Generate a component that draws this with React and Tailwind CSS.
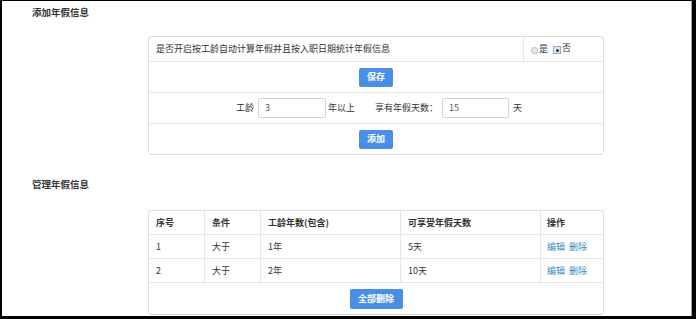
import React from "react";

const rows = [
  { id: 1, cond: "大于", years: "1年", days: "5天" },
  { id: 2, cond: "大于", years: "2年", days: "10天" },
];

export default function App() {
  return (
    <div className="w-[696px] h-[319px] bg-black overflow-hidden" style={{ fontFamily: '"Noto Sans CJK SC", "Liberation Sans", sans-serif' }}>
      <div className="ml-[2px] mt-px w-[690px] h-[315px] bg-white border-r border-gray-400 overflow-hidden text-[9px] text-[#333]">
        {/* 添加年假信息 */}
        <h2 className="pl-[30px] pt-[5px] h-[35px] text-[9.5px] font-bold leading-[12px]">添加年假信息</h2>
        <div className="ml-[146px] w-[456px] border border-[#ddd] rounded-[3px]">
          <div className="flex h-[25px] border-b border-[#e6e6e6]">
            <div className="w-[375px] pl-[7px] flex items-center border-r border-[#e6e6e6]">是否开启按工龄自动计算年假并且按入职日期统计年假信息</div>
            <div className="flex items-center pl-[7px]">
              <span className="w-[7px] h-[7px] rounded-full border border-[#bbb] bg-[#e8e8e8] mt-[2px]"></span>
              <span className="ml-px">是</span>
              <span className="ml-[5px] w-[8px] h-[8px] border border-[#9aa6c8] bg-[#dfe6f5] flex items-center justify-center mt-[2px]">
                <span className="w-[3px] h-[3px] rounded-full bg-[#333]"></span>
              </span>
              <span className="ml-px -mt-[3px]">否</span>
            </div>
          </div>
          <div className="flex h-[31px] items-center justify-center border-b border-[#e6e6e6]">
            <button className="w-[34px] h-[19px] bg-[#4a8fe6] text-white font-bold rounded-[2px]">保存</button>
          </div>
          <div className="flex h-[31px] items-center justify-center pl-[6px] border-b border-[#e6e6e6]">
            <span>工龄</span>
            <div className="ml-[4px] w-[68px] h-[20px] border border-[#d4d4d4] rounded-[2px] flex items-center pl-[6px] text-[#555]">3</div>
            <span className="ml-[2px]">年以上</span>
            <span className="ml-[20px]">享有年假天数：</span>
            <div className="ml-[4px] w-[67px] h-[20px] border border-[#d4d4d4] rounded-[2px] flex items-center pl-[6px] text-[#555]">15</div>
            <span className="ml-[4px]">天</span>
          </div>
          <div className="flex h-[30px] items-center justify-center">
            <button className="w-[34px] h-[19px] bg-[#4a8fe6] text-white font-bold rounded-[2px]">添加</button>
          </div>
        </div>

        {/* 管理年假信息 */}
        <h2 className="pl-[30px] mt-[23px] h-[32px] text-[9.5px] font-bold leading-[12px]">管理年假信息</h2>
        <div className="ml-[146px] w-[456px] border border-[#ddd] rounded-[3px]">
          <div className="flex h-[24px] items-center border-b border-[#e6e6e6] font-bold">
            <div className="w-[56px] h-full pl-[7px] flex items-center border-r border-[#e6e6e6]">序号</div>
            <div className="w-[56px] h-full pl-[7px] flex items-center border-r border-[#e6e6e6]">条件</div>
            <div className="w-[140px] h-full pl-[7px] flex items-center border-r border-[#e6e6e6]">工龄年数(包含)</div>
            <div className="w-[140px] h-full pl-[7px] flex items-center border-r border-[#e6e6e6]">可享受年假天数</div>
            <div className="flex-1 h-full pl-[6px] flex items-center">操作</div>
          </div>
          {rows.map((r) => (
            <div key={r.id} className="flex h-[24px] items-center border-b border-[#e6e6e6]">
              <div className="w-[56px] h-full pl-[7px] flex items-center border-r border-[#e6e6e6]">{r.id}</div>
              <div className="w-[56px] h-full pl-[7px] flex items-center border-r border-[#e6e6e6]">{r.cond}</div>
              <div className="w-[140px] h-full pl-[7px] flex items-center border-r border-[#e6e6e6]">{r.years}</div>
              <div className="w-[140px] h-full pl-[7px] flex items-center border-r border-[#e6e6e6]">{r.days}</div>
              <div className="flex-1 h-full pl-[6px] flex items-center gap-[4px] text-[#2f8ec0]">
                <span>编辑</span>
                <span>删除</span>
              </div>
            </div>
          ))}
          <div className="flex h-[31px] items-center justify-center">
            <button className="w-[53px] h-[20px] bg-[#4a8fe6] text-white font-bold rounded-[2px]">全部删除</button>
          </div>
        </div>
      </div>
    </div>
  );
}
